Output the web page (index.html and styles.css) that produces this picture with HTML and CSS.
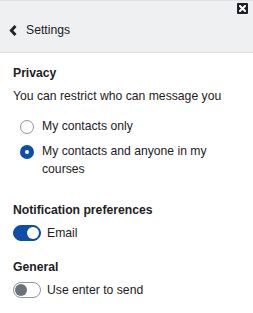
FILE: index.html
```html
<!DOCTYPE html>
<html>
<head>
<meta charset="utf-8">
<link rel="stylesheet" href="styles.css">
</head>
<body>
<div class="panel">
  <div class="header">
    <button class="close" aria-label="Close">
      <svg width="7" height="7" viewBox="0 0 7 7"><path d="M1 1L6 6M6 1L1 6" stroke="#fff" stroke-width="2" stroke-linecap="square"/></svg>
    </button>
    <div class="title">
      <svg class="chev" width="8" height="11" viewBox="0 0 8 11"><path d="M6.5 1L2.3 5.5L6.5 10" fill="none" stroke="#1d2125" stroke-width="2.8"/></svg>
      <span>Settings</span>
    </div>
  </div>
  <div class="body">
    <section class="sec privacy">
      <h3>Privacy</h3>
      <p class="desc">You can restrict who can message you</p>
      <div class="radios">
        <label class="radio"><span class="dot"></span><span>My contacts only</span></label>
        <label class="radio"><span class="dot on"></span><span>My contacts and anyone in my courses</span></label>
      </div>
    </section>
    <section class="sec">
      <h3>Notification preferences</h3>
      <label class="toggle"><span class="sw on"><span class="knob"></span></span><span>Email</span></label>
    </section>
    <section class="sec">
      <h3>General</h3>
      <label class="toggle"><span class="sw"><span class="knob"></span></span><span>Use enter to send</span></label>
    </section>
  </div>
</div>
</body>
</html>
```
FILE: styles.css
```css
* { box-sizing: border-box; }
html, body { margin: 0; padding: 0; background: #fff; }
body { font-family: "Liberation Sans", Arial, sans-serif; color: #1d2125; font-size: 12.2px; line-height: 18px; }
.panel { width: 253px; }
.header {
  position: relative;
  height: 53px;
  background: #eef0f2;
  border-top: 1px solid #dee2e6;
  border-bottom: 1px solid #dee2e6;
  display: flex;
  align-items: flex-start;
  padding: 20px 0 0 9px;
}
.close {
  position: absolute;
  top: 2px; right: 5px;
  width: 11px; height: 11px;
  padding: 0; border: 0;
  background: #1d2125;
  border-radius: 1px;
  display: flex; align-items: center; justify-content: center;
}
.title { display: flex; align-items: center; gap: 9px; }
.chev { display: block; }
.body { padding: 11px 13px 0; }
.sec { margin-bottom: 16px; }
.privacy { margin-bottom: 23px; }
h3 { margin: 0 0 5px; font-size: 12.2px; font-weight: 700; line-height: 18px; }
.desc { margin: 0 0 12px; }
.radios { padding-left: 7px; display: flex; flex-direction: column; gap: 7px; }
.radio { display: flex; align-items: flex-start; gap: 8px; }
.dot { flex: none; width: 14px; height: 14px; border-radius: 50%; border: 1px solid #8f959e; margin-top: 3px; background: #fff; }
.dot.on { border: 5px solid #0d4ea6; }
.toggle { display: flex; align-items: center; gap: 6px; }
.sw { flex: none; width: 28px; height: 16px; border-radius: 8px; border: 1px solid #8f959e; background: #fff; display: flex; align-items: center; padding: 0 1px; }
.sw .knob { width: 12px; height: 12px; border-radius: 50%; background: #6a737b; }
.sw.on { background: #0d4ea6; border-color: #0d4ea6; justify-content: flex-end; }
.sw.on .knob { background: #fff; }
```
